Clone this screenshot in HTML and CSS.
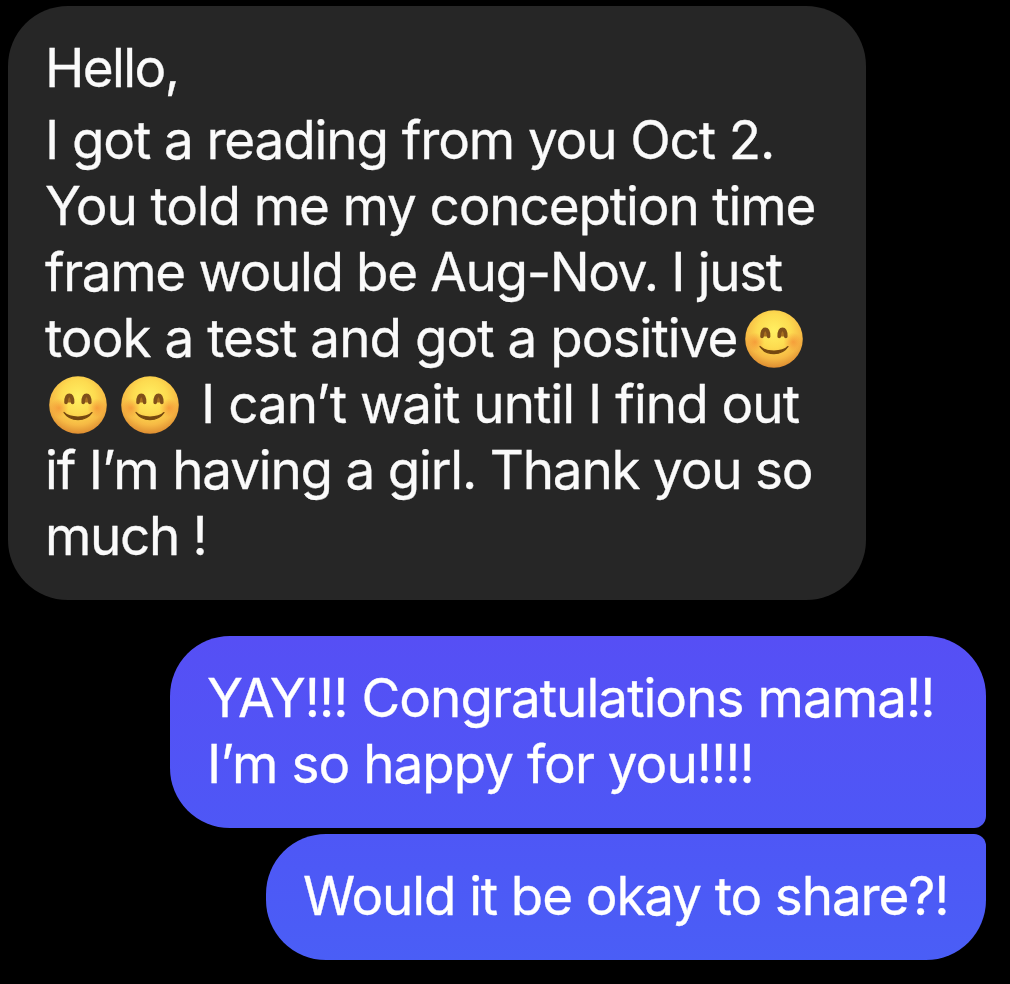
FILE: index.html
```html
<!DOCTYPE html>
<html lang="en">
<head>
    <meta charset="UTF-8">
    <meta name="viewport" content="width=device-width, initial-scale=1.0">
    <title>Messages</title>
    <link rel="stylesheet" href="styles.css">
</head>
<body>

    <!-- Smiley symbol used inside the message text -->
    <svg class="defs" width="0" height="0">
        <defs>
            <radialGradient id="face" cx="50%" cy="36%" r="65%">
                <stop offset="0" stop-color="#fff062" />
                <stop offset="0.45" stop-color="#fddb50" />
                <stop offset="0.75" stop-color="#f6b944" />
                <stop offset="1" stop-color="#dc8a30" />
            </radialGradient>
            <radialGradient id="cheek">
                <stop offset="0" stop-color="#f28030" stop-opacity="0.6" />
                <stop offset="1" stop-color="#f28030" stop-opacity="0" />
            </radialGradient>
            <symbol id="smiley" viewBox="0 0 58 58">
                <circle cx="29" cy="29" r="28.8" fill="url(#face)" />
                <circle cx="10" cy="32" r="9.5" fill="url(#cheek)" />
                <circle cx="48" cy="32" r="9.5" fill="url(#cheek)" />
                <path d="M17 26.5C17 17 23.6 17 23.6 26.5M34.2 26.5C34.2 17 40.8 17 40.8 26.5" fill="#a8701f" stroke="#80501a" stroke-width="3.6" stroke-linecap="round" />
                <path d="M15 36.5C21 46 37 46 43 36.5C37 42.5 21 42.5 15 36.5Z" fill="#754810" stroke="#754810" stroke-width="1.2" stroke-linejoin="round" />
            </symbol>
        </defs>
    </svg>

    <div class="chat">
        <div class="message received">
            <p class="greeting">Hello,</p>
            <p>
                <span class="line">I got a reading from you Oct 2.</span>
                <span class="line">You told me my conception time</span>
                <span class="line tighter">frame would be Aug-Nov. I just</span>
                <span class="line loose">took a test and got a positive<svg class="emoji after-text"><use href="#smiley" /></svg></span>
                <span class="line loose"><svg class="emoji"><use href="#smiley" /></svg><svg class="emoji"><use href="#smiley" /></svg> I can’t wait until I find out</span>
                <span class="line tight">if I’m having a girl. Thank you so</span>
                <span class="line tighter">much !</span>
            </p>
        </div>

        <div class="message sent first">
            <p>
                <span class="line loose">YAY!!! Congratulations mama!!</span>
                <span class="line loose">I’m so happy for you!!!!</span>
            </p>
        </div>

        <div class="message sent last">
            <p><span class="line">Would it be okay to share?!</span></p>
        </div>
    </div>

</body>
</html>
```
FILE: styles.css
```css
body {
    margin: 0;
    background-color: #000000;
    color: #fafafa;
    font-family: 'Inter', 'Liberation Sans', sans-serif;
    font-size: 53px;
    line-height: 66px;
    letter-spacing: -1.12px;
    -webkit-text-stroke: 0.3px;
    overflow: hidden;
}

.defs {
    display: block;
}

.chat {
    display: flex;
    flex-direction: column;
    padding: 6px 24px 24px 8px;
}

.message {
    box-sizing: border-box;
    border-radius: 60px;
}

.message p {
    margin: 0;
}

.line {
    display: block;
    white-space: nowrap;
}

.loose {
    letter-spacing: -0.97px;
}

.tight {
    letter-spacing: -1.2px;
}

.tighter {
    letter-spacing: -1.35px;
}

.received {
    align-self: flex-start;
    width: 858px;
    height: 594px;
    padding: 29px 37px;
    background-color: #262626;
}

.message .greeting {
    margin-bottom: 6px;
    letter-spacing: -1.6px;
}

.sent {
    align-self: flex-end;
    padding: 29px 37px;
    color: #ffffff;
}

.first {
    width: 816px;
    height: 192px;
    margin-top: 36px;
    border-bottom-right-radius: 12px;
    background: linear-gradient(#564ff5, #4e57f6);
}

.last {
    width: 720px;
    height: 126px;
    margin-top: 6px;
    border-top-right-radius: 12px;
    background: linear-gradient(#4e57f6, #4a5ef6);
}

.emoji {
    width: 58px;
    height: 58px;
    margin: 0 8px 0 6px;
    vertical-align: -11px;
}

.emoji:first-child {
    margin-left: 4px;
}

.emoji.after-text {
    margin-left: 8px;
}
```
